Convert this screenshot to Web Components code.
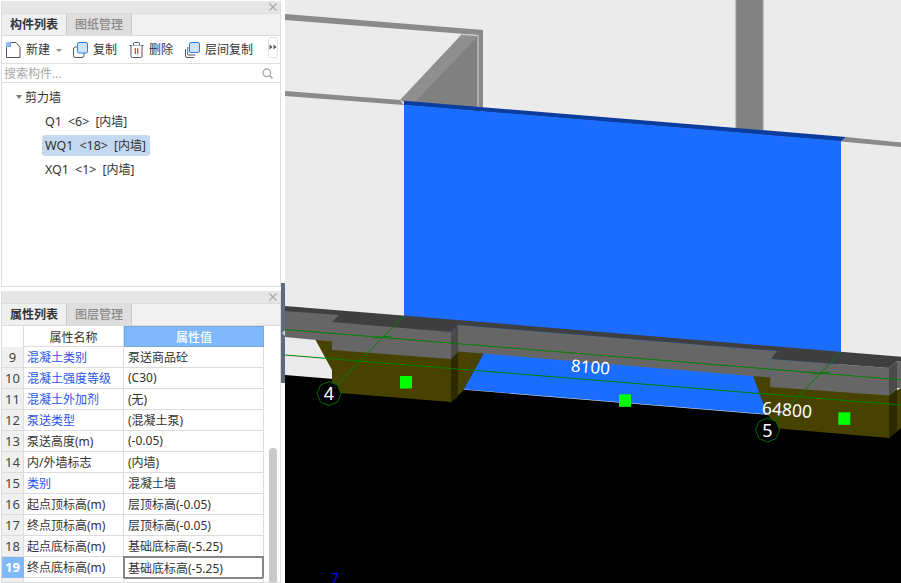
<!DOCTYPE html>
<html lang="zh">
<head>
<meta charset="utf-8">
<title>构件列表</title>
<style>
  html, body { margin: 0; height: 583px; overflow: hidden; background: #fff; }
  body { font: 12px "Noto Sans", "Noto Sans CJK SC", sans-serif; color: #333; }
</style>
</head>
<body>
<app-shell>
  <dock-panel slot="side" tab-one="构件列表" tab-two="图纸管理" style="height:286px">
    <tool-bar>
      <tool-button label="新建" icon="new" caret></tool-button>
      <tool-button label="复制" icon="copy"></tool-button>
      <tool-button label="删除" icon="trash"></tool-button>
      <tool-button label="层间复制" icon="floors"></tool-button>
    </tool-bar>
    <search-box placeholder="搜索构件..."></search-box>
    <tree-view>
      <tree-group label="剪力墙">
        <tree-item name="Q1" count="<6>" tag="[内墙]"></tree-item>
        <tree-item name="WQ1" count="<18>" tag="[内墙]" selected></tree-item>
        <tree-item name="XQ1" count="<1>" tag="[内墙]"></tree-item>
      </tree-group>
    </tree-view>
  </dock-panel>
  <dock-panel slot="side" tab-one="属性列表" tab-two="图层管理" style="height:292px;margin-top:4px">
    <prop-table>
      <prop-row num="9" name="混凝土类别" value="泵送商品砼" link></prop-row>
      <prop-row num="10" name="混凝土强度等级" value="(C30)" link></prop-row>
      <prop-row num="11" name="混凝土外加剂" value="(无)" link></prop-row>
      <prop-row num="12" name="泵送类型" value="(混凝土泵)" link></prop-row>
      <prop-row num="13" name="泵送高度(m)" value="(-0.05)"></prop-row>
      <prop-row num="14" name="内/外墙标志" value="(内墙)"></prop-row>
      <prop-row num="15" name="类别" value="混凝土墙" link></prop-row>
      <prop-row num="16" name="起点顶标高(m)" value="层顶标高(-0.05)"></prop-row>
      <prop-row num="17" name="终点顶标高(m)" value="层顶标高(-0.05)"></prop-row>
      <prop-row num="18" name="起点底标高(m)" value="基础底标高(-5.25)"></prop-row>
      <prop-row num="19" name="终点底标高(m)" value="基础底标高(-5.25)" selected></prop-row>
      <prop-row num="" name="" value=""></prop-row>
    </prop-table>
  </dock-panel>
  <model-view slot="main"></model-view>
</app-shell>

<script>
// Page layout: the two panels on the left, the splitter, the 3D view.
const shellTemplate = document.createElement('template')
shellTemplate.innerHTML = `
<style>
  :host { display: flex; height: 583px; background: #fff; }
  #side { display: flex; flex-direction: column; width: 281px; flex: none; padding: 1px 0 0 1px; box-sizing: border-box; }
  #splitter { width: 4px; flex: none; display: flex; flex-direction: column; }
  #handle { height: 100px; margin-top: 283px; background: #5f6b7a; display: flex; align-items: center; justify-content: flex-end; }
  #handle i { border: 3.5px solid transparent; border-right: 3px solid #c9ced4; border-left: 0; }
  #main { flex: 1; min-width: 0; display: flex; }
</style>
<div id="side"><slot name="side"></slot></div>
<div id="splitter"><div id="handle"><i></i></div></div>
<div id="main"><slot name="main"></slot></div>
`
customElements.define('app-shell', class extends HTMLElement {
  constructor () {
    super()
    this.attachShadow({ mode: 'open' })
    this.shadowRoot.appendChild(shellTemplate.content.cloneNode(true))
  }
})

// A docked panel with a close strip and two tabs.
const panelTemplate = document.createElement('template')
panelTemplate.innerHTML = `
<style>
  :host { display: flex; flex-direction: column; box-sizing: border-box; flex: none; overflow: hidden;
    border-left: 1px solid #dcdcdc; border-right: 1px solid #dcdcdc; border-bottom: 1px solid #dcdcdc; background: #fff; }
  #title { height: 12px; flex: none; background: #e6e6e6; display: flex; justify-content: flex-end; align-items: center; padding-right: 2px; }
  #title svg { display: block; }
  #tabs { height: 23px; flex: none; display: flex; background: #f0f0f0; border-top: 1px solid #dcdcdc; border-bottom: 1px solid #dcdcdc; box-sizing: border-box; }
  .tab { width: 64px; box-sizing: border-box; display: flex; align-items: center; justify-content: center; line-height: 1; }
  #one { font-weight: 700; color: #333; }
  #two { background: #dedede; color: #8a8a8a; border-left: 1px solid #cbcbcb; border-right: 1px solid #cbcbcb; font-weight: 500; width: 66px; }
  #body { flex: 1; min-height: 0; display: flex; flex-direction: column; }
</style>
<div id="title">
  <svg width="10" height="10" viewBox="0 0 10 10"><path d="M1.5 1.500l7 7M8.500 1.500l-7 7" stroke="#a8a8a8" stroke-width="1.200" fill="none"/></svg>
</div>
<div id="tabs"><div class="tab" id="one"></div><div class="tab" id="two"></div></div>
<div id="body"><slot></slot></div>
`
customElements.define('dock-panel', class extends HTMLElement {
  constructor () {
    super()
    this.attachShadow({ mode: 'open' })
    this.shadowRoot.appendChild(panelTemplate.content.cloneNode(true))
  }

  connectedCallback () {
    this.shadowRoot.querySelector('#one').textContent = this.getAttribute('tab-one')
    this.shadowRoot.querySelector('#two').textContent = this.getAttribute('tab-two')
  }
})

// Toolbar row with the overflow button at its end.
const toolbarTemplate = document.createElement('template')
toolbarTemplate.innerHTML = `
<style>
  :host { display: flex; height: 28px; box-sizing: border-box; flex: none; border-bottom: 1px solid #dedede; padding-left: 4px; align-items: center; background: #fff; }
  #items { display: flex; flex: 1; gap: 12px; align-items: center; padding-top: 1px; }
  #more { width: 10px; height: 21px; box-sizing: border-box; margin: 0 2px 5px 0; border: 1px solid #e4e4e4; border-radius: 3px; display: flex; align-items: center; justify-content: center; }
</style>
<div id="items"><slot></slot></div>
<div id="more"><svg width="8" height="6" viewBox="0 0 8 6"><path d="M0.500 0.500l3 2.500-3 2.500zM4.500 0.500l3 2.500-3 2.500z" fill="#555"/></svg></div>
`
customElements.define('tool-bar', class extends HTMLElement {
  constructor () {
    super()
    this.attachShadow({ mode: 'open' })
    this.shadowRoot.appendChild(toolbarTemplate.content.cloneNode(true))
  }
})

const toolIcons = {
  new: `<svg width="15" height="16" viewBox="0 0 15 16"><path d="M.5 4v11.500h13.500v-10.500l-4-4.500h-5" fill="#fff" stroke="#4a5568"/><rect x="0" y="0" width="5" height="5" fill="#4a90e8"/><path d="M1 0v5M3 0v5M0 1h5M0 3h5" stroke="#cfe2fa" stroke-width=".7"/></svg>`,
  copy: `<svg width="15" height="16" viewBox="0 0 15 16"><rect x=".5" y="5" width="10.500" height="10.500" rx="2" fill="#fff" stroke="#4a5568"/><rect x="4.500" y=".5" width="10" height="10.500" rx="1.500" fill="#cfe3fb" stroke="#2f7fe0"/></svg>`,
  trash: `<svg width="15" height="16" viewBox="0 0 15 16"><path d="M.5 3.500h14M4.500 3.500v-2a1 1 0 0 1 1-1h4a1 1 0 0 1 1 1v2" fill="none" stroke="#4a5568"/><path d="M2 3.500v10.500a1.500 1.500 0 0 0 1.500 1.500h8a1.500 1.500 0 0 0 1.500-1.500v-10.500" fill="#fff" stroke="#4a5568"/><path d="M6.300 6v6M8.700 6v6" stroke="#e02020" stroke-width="1.100"/></svg>`,
  floors: `<svg width="15" height="16" viewBox="0 0 15 16"><path d="M.5 7v7a1.500 1.500 0 0 0 1.500 1.500h7" fill="none" stroke="#4a5568"/><path d="M2.800 5v7.500a.5.5 0 0 0 .5.5h7" fill="none" stroke="#4a5568"/><rect x="4.500" y=".5" width="10" height="10" rx="1.500" fill="#cfe3fb" stroke="#2f7fe0"/></svg>`
}

// One toolbar action: icon, label and optional caret.
const toolButtonTemplate = document.createElement('template')
toolButtonTemplate.innerHTML = `
<style>
  :host { display: inline-flex; align-items: center; gap: 5px; color: #333; line-height: 1; white-space: nowrap; }
  svg { display: block; }
  #caret { width: 0; height: 0; border: 3px solid transparent; border-top: 3px solid #8c8c8c; border-bottom: 0; margin-left: 1px; margin-right: -1px; }
</style>
<span id="icon"></span><span id="label"></span><span id="caret"></span>
`
customElements.define('tool-button', class extends HTMLElement {
  constructor () {
    super()
    this.attachShadow({ mode: 'open' })
    this.shadowRoot.appendChild(toolButtonTemplate.content.cloneNode(true))
  }

  connectedCallback () {
    this.shadowRoot.querySelector('#icon').innerHTML = toolIcons[this.getAttribute('icon')]
    this.shadowRoot.querySelector('#label').textContent = this.getAttribute('label')
    if (!this.hasAttribute('caret')) this.shadowRoot.querySelector('#caret').remove()
  }
})

// Search field with the magnifier on the right.
const searchTemplate = document.createElement('template')
searchTemplate.innerHTML = `
<style>
  :host { display: flex; height: 19px; flex: none; box-sizing: border-box; border-bottom: 1px solid #dedede; align-items: center; justify-content: space-between; padding: 0 7px 0 2px; background: #fff; color: #a8a8a8; }
  svg { display: block; }
</style>
<span id="text"></span>
<svg width="11" height="11" viewBox="0 0 11 11"><circle cx="4.800" cy="4.800" r="3.800" fill="none" stroke="#aaa" stroke-width="1.300"/><path d="M7.500 7.500l3 3" stroke="#aaa" stroke-width="1.500"/></svg>
`
customElements.define('search-box', class extends HTMLElement {
  constructor () {
    super()
    this.attachShadow({ mode: 'open' })
    this.shadowRoot.appendChild(searchTemplate.content.cloneNode(true))
  }

  connectedCallback () {
    this.shadowRoot.querySelector('#text').textContent = this.getAttribute('placeholder')
  }
})

// Tree container.
const treeTemplate = document.createElement('template')
treeTemplate.innerHTML = `
<style>
  :host { display: block; padding: 2px 0 0 14px; flex: 1; background: #fff; }
</style>
<slot></slot>
`
customElements.define('tree-view', class extends HTMLElement {
  constructor () {
    super()
    this.attachShadow({ mode: 'open' })
    this.shadowRoot.appendChild(treeTemplate.content.cloneNode(true))
  }
})

// Expanded tree node with its children under it.
const groupTemplate = document.createElement('template')
groupTemplate.innerHTML = `
<style>
  :host { display: block; }
  #head { display: flex; align-items: center; height: 24px; gap: 3px; color: #333; }
  #arrow { width: 0; height: 0; border: 3.500px solid transparent; border-top: 4px solid #777; border-bottom: 0; }
  #kids { display: flex; flex-direction: column; align-items: flex-start; padding-left: 26px; }
</style>
<div id="head"><span id="arrow"></span><span id="label"></span></div>
<div id="kids"><slot></slot></div>
`
customElements.define('tree-group', class extends HTMLElement {
  constructor () {
    super()
    this.attachShadow({ mode: 'open' })
    this.shadowRoot.appendChild(groupTemplate.content.cloneNode(true))
  }

  connectedCallback () {
    this.shadowRoot.querySelector('#label').textContent = this.getAttribute('label')
  }
})

// Leaf of the tree: name, quantity and wall kind.
const treeItemTemplate = document.createElement('template')
treeItemTemplate.innerHTML = `
<style>
  :host { display: flex; align-items: center; gap: 6px; height: 21px; margin: 1.500px 0; padding: 0 4px 0 3px; border-radius: 3px; white-space: pre; color: #333; font-size: 12.500px; }
  :host([selected]) { background: #c3d9f1; }
  #tag { font-size: 12px; }
</style>
<span id="name"></span><span id="count"></span><span id="tag"></span>
`
customElements.define('tree-item', class extends HTMLElement {
  constructor () {
    super()
    this.attachShadow({ mode: 'open' })
    this.shadowRoot.appendChild(treeItemTemplate.content.cloneNode(true))
  }

  connectedCallback () {
    for (const key of ['name', 'count', 'tag']) {
      this.shadowRoot.querySelector('#' + key).textContent = this.getAttribute(key)
    }
  }
})

// Property grid: header row, rows, scrollbar.
const tableTemplate = document.createElement('template')
tableTemplate.innerHTML = `
<style>
  :host { display: flex; flex: 1; min-height: 0; background: #fff; }
  #grid { width: 263px; flex: none; display: flex; flex-direction: column; }
  #head { display: grid; grid-template-columns: 22px 100px 140px; height: 21px; flex: none; box-sizing: border-box; }
  #head div { display: flex; align-items: center; justify-content: center; box-sizing: border-box; padding-top: 1px; }
  #corner { border-right: 1px solid #dcdcdc; }
  #name { border-right: 1px solid #dcdcdc; border-bottom: 1px solid #dcdcdc; color: #333; }
  #value { background: #7fb8fb; color: #fff; border: 1px solid #6ea8e6; font-weight: 500; }
  #track { flex: 1; display: flex; justify-content: center; }
  #thumb { width: 8px; height: 136px; margin-top: 122px; margin-left: 1px; background: #c9c9c9; border-radius: 4px 4px 0 0; }
</style>
<div id="grid">
  <div id="head"><div id="corner"></div><div id="name">属性名称</div><div id="value">属性值</div></div>
  <slot></slot>
</div>
<div id="track"><div id="thumb"></div></div>
`
customElements.define('prop-table', class extends HTMLElement {
  constructor () {
    super()
    this.attachShadow({ mode: 'open' })
    this.shadowRoot.appendChild(tableTemplate.content.cloneNode(true))
  }
})

const rowTemplate = document.createElement('template')
rowTemplate.innerHTML = `
<style>
  :host { display: grid; grid-template-columns: 22px 100px 140px; height: 21px; flex: none; color: #333; }
  div { display: flex; align-items: center; box-sizing: border-box; white-space: nowrap; border-bottom: 1px solid #dcdcdc; border-right: 1px solid #dcdcdc; padding: 0 0 1px 3px; }
  #value { padding-left: 4px; }
  #num { background: #f0f0f0; justify-content: center; padding: 0 0 1px; font-size: 13px; color: #444; }
  :host([link]) #name { color: #2a55e5; }
  :host([selected]) #num { background: #7fb8fb; color: #fff; font-weight: 700; border-color: #7fb8fb; }
  :host([selected]) #value { border: 2px solid #858585; padding: 0 0 0 3px; margin: -1px 0 -1px -1px; height: 23px; width: 141px; background: #fff; }
</style>
<div id="num"></div><div id="name"></div><div id="value"></div>
`
customElements.define('prop-row', class extends HTMLElement {
  constructor () {
    super()
    this.attachShadow({ mode: 'open' })
    this.shadowRoot.appendChild(rowTemplate.content.cloneNode(true))
  }

  connectedCallback () {
    for (const key of ['num', 'name', 'value']) {
      this.shadowRoot.querySelector('#' + key).textContent = this.getAttribute(key)
    }
  }
})

// The 3D view: a free canvas, everything at scene coordinates.
const viewTemplate = document.createElement('template')
viewTemplate.innerHTML = `
<style>
  :host { display: block; flex: 1; min-width: 0; background: #ebebeb; }
  svg { display: block; width: 616px; height: 583px; }
  text { font-family: "Noto Sans", "Open Sans", sans-serif; fill: #fff; }
</style>
<svg viewBox="285 0 616 583">
  <rect x="285" y="0" width="616" height="583" fill="#ebebeb"/>

  <!-- back walls -->
  <polygon points="285,14 483,30 483,108 478,108 478,35 285,20" fill="#8a8a8a"/>
  <polygon points="400,100 462,34 478,35.500 478,108 404,102" fill="#8f8f8f"/>
  <polygon points="415,102 478,36 478,108" fill="#808080"/>
  <path d="M462 34.500L478 35.500V108" fill="none" stroke="#d4d4d4" stroke-width="1"/>
  <polygon points="285,91 400,100 404,105 285,96" fill="#8a8a8a"/>
  <rect x="736" y="0" width="27" height="132" fill="#828282"/>
  <rect x="735.500" y="0" width="1" height="128" fill="#9c9c9c"/>
  <rect x="762.500" y="0" width="1" height="130" fill="#9c9c9c"/>
  <polygon points="846,137 901,142.500 901,147 841,141.500" fill="#8a8a8a"/>

  <!-- selected wall -->
  <polygon points="404,100.700 846,137 841,141.500 404,105.200" fill="#0d3d9c"/>
  <polygon points="404,104.700 841,141 841,360 767,414.300 463,389.300 404,320" fill="#1a6dff"/>

  <!-- ground -->
  <polygon points="285,375 901,425.800 901,583 285,583" fill="#000"/>

  <!-- footing, left -->
  <polygon points="315,339 332,341 451,350 451,402 340,393 332,385 332,370" fill="#484200"/>
  <polygon points="458,351 484,353 463,391 451,402 451,359" fill="#484200"/>
  <polygon points="451,359 458,352 458,397 451,402" fill="#2e2a00"/>

  <!-- footing, right -->
  <polygon points="753,375.500 770,377 889,390 889,438 779,428.500 767,414.300" fill="#484200"/>
  <polygon points="889,395 901,388 901,428 889,438" fill="#484200"/>
  <polygon points="889,395.500 897,388.500 897,431 889,438" fill="#2e2a00"/>

  <!-- beam -->
  <polygon points="285,310 451,324 451,359 332,350 332,341.500 285,337" fill="#666"/>
  <polygon points="458,325 777,351 771,359 770,377.500 458,351.500" fill="#666"/>
  <polygon points="771,359 889,368 889,395.500 770,387" fill="#666"/>
  <polygon points="897,361 901,361.500 901,388.500 897,388" fill="#666"/>
  <polygon points="285,306 458,320 458,325 451,332 332,322 339,315 285,311" fill="#3f3f3f"/>
  <polygon points="458,320 901,356.800 901,361.500 897,361 889,368 771,359 777,351 458,325" fill="#3f3f3f"/>
  <polygon points="451,332 458,325 458,352 451,359" fill="#4a4a4a"/>
  <polygon points="889,368 897,361 897,388.500 889,395.500" fill="#4a4a4a"/>

  <!-- axis lines -->
  <g stroke="#008000" stroke-width="1" fill="none">
    <path d="M285 329.500L901 379.800"/>
    <path d="M285 355L901 405"/>
    <path d="M403.500 316L337 385"/>
    <path d="M841 352L775 420.500"/>
    <path d="M373 338.300L391.700 336"/>
    <path d="M811.700 374.300L830 372"/>
    <polygon points="329,381.500 337.500,385 341,393.500 337.500,402 329,405.500 320.500,402 317,393.500 320.500,385" fill="#000" stroke="#006a00"/>
    <polygon points="767.500,418 776,421.500 779.500,430 776,438.500 767.500,442 759,438.500 755.500,430 759,421.500" fill="#000" stroke="#006a00"/>
  </g>

  <!-- grips -->
  <g fill="#00ff00">
    <rect x="400" y="376" width="12" height="12.500"/>
    <rect x="619" y="394.300" width="12" height="12.500"/>
    <rect x="838.300" y="412.300" width="12" height="12.500"/>
  </g>

  <text x="329" y="400" font-size="18" text-anchor="middle">4</text>
  <text x="767.500" y="436.500" font-size="18" text-anchor="middle">5</text>
  <text x="590.500" y="373" font-size="17" text-anchor="middle" transform="rotate(4.700 590.500 367)">8100</text>
  <text x="787" y="416" font-size="17.500" text-anchor="middle" transform="rotate(4.700 787 410)">64800</text>
  <text x="335" y="583" font-size="13.500" text-anchor="middle" style="fill:#0000ff">7</text>
</svg>
`
customElements.define('model-view', class extends HTMLElement {
  constructor () {
    super()
    this.attachShadow({ mode: 'open' })
    this.shadowRoot.appendChild(viewTemplate.content.cloneNode(true))
  }
})
</script>
</body>
</html>
